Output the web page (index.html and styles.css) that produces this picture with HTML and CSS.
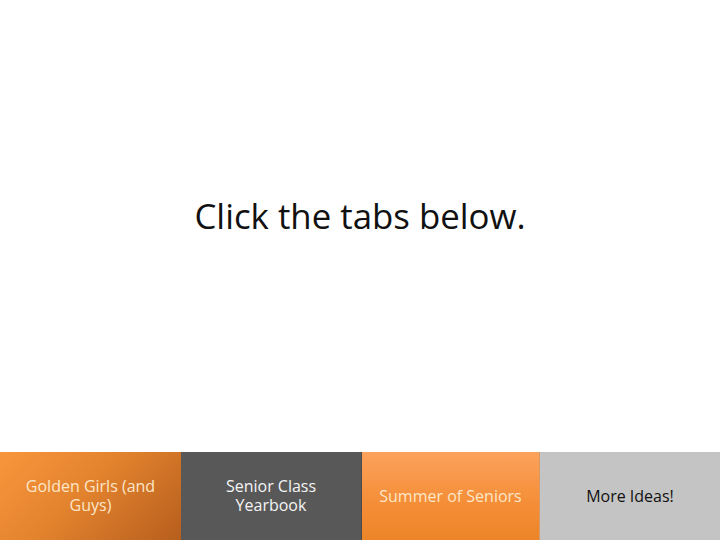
FILE: index.html
```html
<!DOCTYPE html>
<html>
<head>
<meta charset="utf-8">
<link rel="stylesheet" href="styles.css">
</head>
<body>
<div class="page">
  <main class="stage">
    <h1 class="title">Click the tabs below.</h1>
  </main>
  <nav class="tabs">
    <div class="tab tab-gold">Golden Girls (and Guys)</div>
    <div class="tab tab-dark">Senior Class Yearbook</div>
    <div class="tab tab-orange">Summer of Seniors</div>
    <div class="tab tab-light">More Ideas!</div>
  </nav>
</div>
</body>
</html>
```
FILE: styles.css
```css
html, body {
  margin: 0;
  padding: 0;
  background: #ffffff;
}
.page {
  width: 720px;
  height: 540px;
  display: flex;
  flex-direction: column;
  font-family: "Open Sans", "Noto Sans", sans-serif;
}
.stage {
  flex: 1;
  display: flex;
  align-items: flex-start;
  justify-content: center;
  padding-top: 192px;
}
.title {
  margin: 0;
  font-weight: 400;
  font-size: 34.8px;
  line-height: 48px;
  color: #111;
  letter-spacing: 0;
}
.tabs {
  height: 88px;
  display: grid;
  grid-template-columns: 181px 180px 178px 181px;
}
.tab {
  display: flex;
  align-items: center;
  justify-content: center;
  text-align: center;
  font-size: 16px;
  line-height: 19px;
  padding: 0 20px;
}
.tab-gold {
  background: linear-gradient(135deg, #f8963c 0%, #e3832e 45%, #b65e1d 100%);
  color: #fde6c8;
}
.tab-dark {
  background: #585858;
  color: #f4f4f4;
}
.tab-orange {
  background: linear-gradient(180deg, #fca25c 0%, #f48d36 60%, #ec8528 100%);
  color: #fde6c8;
  border-left: 1px solid #4a4a4a;
  padding: 0 8px;
  white-space: nowrap;
}
.tab-light {
  background: #c4c4c4;
  color: #111;
  border-left: 1px solid #d69a68;
}
```
